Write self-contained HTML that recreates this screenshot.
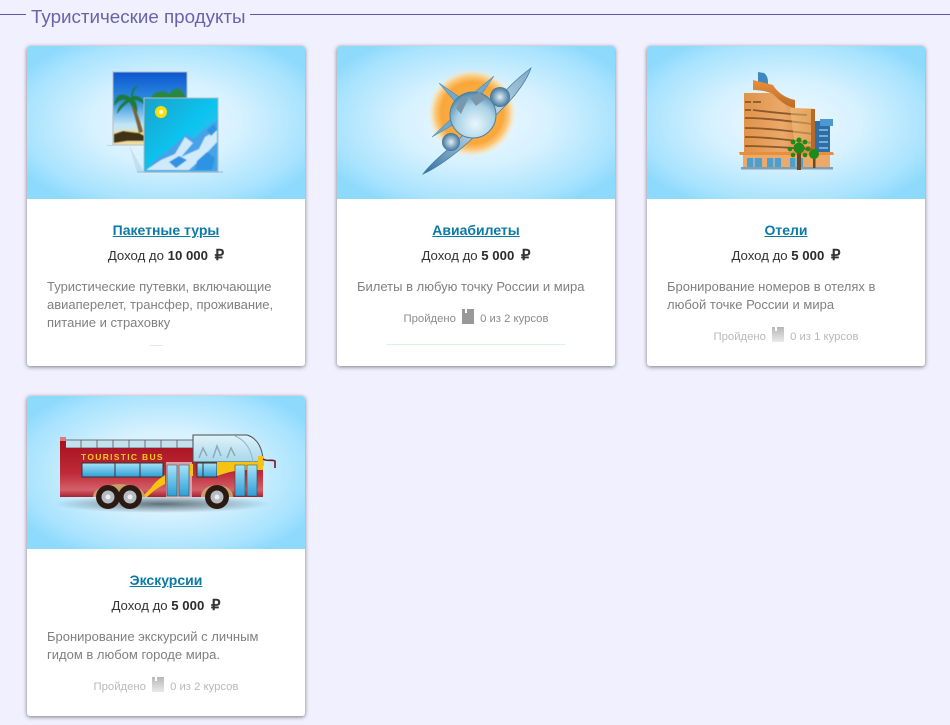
<!DOCTYPE html>
<html lang="ru"><head><meta charset="utf-8"><title>Туристические продукты</title>
<style>
html,body{margin:0;padding:0;width:950px;height:725px;overflow:hidden;background:#f1f0fe;font-family:"Liberation Sans",sans-serif}
.ln{position:absolute;height:1px;top:14px;background:#5f58a8}
h1{position:absolute;left:31px;top:6px;margin:0;font-weight:400;font-size:18.8px;line-height:22px;color:#6a63aa;white-space:nowrap}
.card{position:absolute;width:278px;height:320px;background:#fff;border-radius:3px;box-shadow:0 1px 4px rgba(0,0,0,.5);overflow:hidden}
.img{position:absolute;left:0;top:0;width:278px;height:153px;background:radial-gradient(ellipse 168px 94px at 50% 50%,#eef9ff 0,#d6f1ff 45%,#a8e3fe 85%,#8edafd 100%)}
.img svg{position:absolute;left:0;top:0}
.t{position:absolute;left:0;width:278px;top:175px;text-align:center;font-size:14px;line-height:18px;font-weight:700;color:#0a7aa6;text-decoration:underline}
.p{position:absolute;left:0;width:278px;top:201px;text-align:center;font-size:13.2px;line-height:18px;color:#333}
.p b{color:#2b2b2b}
.p span{font-size:15px;margin-left:3px;font-weight:700}
.d{position:absolute;left:20px;top:232px;width:250px;font-size:13px;line-height:18px;color:#808080}
.c{position:absolute;left:0;width:278px;text-align:center;font-size:11.3px;line-height:14px;color:#8a8a8a;white-space:nowrap}
.c i{display:inline-block;width:12px;height:15px;background:#999;vertical-align:-2px;margin:0 6px 0 3px;position:relative}
.c i:after{content:"";position:absolute;left:3px;top:0;width:2px;height:4px;background:#fff}
</style></head><body>
<div class="ln" style="left:0;width:26px"></div>
<div class="ln" style="left:250px;width:700px"></div>
<h1>Туристические продукты</h1>

<div class="card" style="left:27px;top:46px">
 <div class="img"><svg width="278" height="153" viewBox="0 0 278 153">
  <defs>
   <filter id="b"><feGaussianBlur stdDeviation=".45"/></filter>
   <linearGradient id="sky" x1="0" y1="0" x2="0" y2="1"><stop offset="0" stop-color="#0d56cf"/><stop offset=".4" stop-color="#2f8fe0"/><stop offset=".72" stop-color="#bfe6f6"/><stop offset="1" stop-color="#f5e7b0"/></linearGradient>
   <linearGradient id="ice" x1="0" y1="0" x2="1" y2="1"><stop offset="0" stop-color="#1aa2c8"/><stop offset=".5" stop-color="#0cc3ef"/><stop offset="1" stop-color="#46c4ee"/></linearGradient>
  </defs>
  <path d="M80 99H86V100H80ZM160 125H196V127H110V125Z" fill="#9ab" opacity=".4"/>
  <path d="M102 99L117 126H110Z" fill="#9ab" opacity=".25"/>
  <rect x="86" y="26" width="74" height="73" fill="url(#sky)" stroke="#b5bcc2"/>
  <g filter="url(#b)">
  <path d="M87 86L104 84 118 86V98H87Z" fill="#f0dc9a"/>
  <path d="M87 88L96 85 112 87 118 90V95H100L87 97Z" fill="#3f3218"/>
  <path d="M112 87C109 74 106 63 102 54L104 53C109 63 113 74 116 86Z" fill="#7a6230"/>
  <path d="M104 52C96 46 88 47 87 60 92 54 96 53 99 54 94 58 90 62 90 68 95 61 99 58 102 56 105 60 108 62 110 67 111 60 109 56 107 54 112 54 116 57 118 60 117 52 111 49 106 50 106 45 108 42 112 40 106 40 104 45 104 52Z" fill="#1f7a3a"/>
  <path d="M128 47C134 44 140 45 142 48 146 43 152 40 156 46 158 50 159 52 159 56H122C124 52 125 49 128 47Z" fill="#2a8640"/>
  </g>
  <rect x="117" y="52" width="74" height="74" fill="url(#ice)" stroke="#b5bcc2"/>
  <g filter="url(#b)">
  <path d="M118 125L128 114 141 104 152 95 160 88 166 93 176 84 190 74V125Z" fill="#46a3e8"/>
  <path d="M119 124L134 114 148 108 158 91 166 97 154 111 172 103 178 91 190 84V96L174 113 162 124Z" fill="#cfeafa"/>
  <path d="M170 115L180 106 188 112 185 124H168ZM142 116L152 110 160 114 149 122ZM180 84L187 78 190 84 184 90Z" fill="#2f93e2"/>
  </g>
  <circle cx="134" cy="66" r="6" fill="#ffdf00"/><circle cx="134" cy="66" r="2.4" fill="#fff6c8"/>
 </svg></div>
 <a class="t">Пакетные туры</a>
 <div class="p">Доход до <b>10 000</b> <span>₽</span></div>
 <div class="d">Туристические путевки, включающие авиаперелет, трансфер, проживание, питание и страховку</div>
 <div style="position:absolute;left:123px;top:299px;width:13px;height:1px;background:#e6e6e6"></div>
</div>

<div class="card" style="left:337px;top:46px">
 <div class="img"><svg width="278" height="153" viewBox="0 0 278 153">
  <defs>
   <radialGradient id="sun"><stop offset="0" stop-color="#ffb94a"/><stop offset=".7" stop-color="#f9a63a"/><stop offset=".84" stop-color="#fcca7e"/><stop offset="1" stop-color="#ffe9bc" stop-opacity="0"/></radialGradient>
   <radialGradient id="body" cx=".55" cy=".7" r=".7"><stop offset="0" stop-color="#e8f7fc"/><stop offset=".6" stop-color="#a9d2e6"/><stop offset="1" stop-color="#4f86aa"/></radialGradient>
   <radialGradient id="eng"><stop offset="0" stop-color="#e6eef4"/><stop offset=".5" stop-color="#8fb2c9"/><stop offset="1" stop-color="#3f7498"/></radialGradient>
   <linearGradient id="wing" x1="0" y1="1" x2="1" y2="0"><stop offset="0" stop-color="#2f6f9f"/><stop offset=".5" stop-color="#d0e2ee"/><stop offset="1" stop-color="#7eaac6"/></linearGradient>
  </defs>
  <circle cx="135" cy="67" r="44" fill="url(#sun)"/>
  <path d="M86 128C98 112 118 100 136 78L164 50C174 38 186 28 194 22 191 32 180 48 168 60L140 88C122 106 100 122 86 128Z" fill="url(#wing)" stroke="#3d7aa6" stroke-width=".7"/>
  <path d="M102 37L124 52 120 58ZM157 30L134 49 140 55ZM95 91L117 70 121 76Z" fill="#6fa9d0" stroke="#3b7aa6" stroke-width=".5"/>
  <circle cx="114" cy="96" r="9" fill="url(#eng)"/>
  <circle cx="163" cy="51" r="10" fill="url(#eng)"/>
  <circle cx="136" cy="69" r="23" fill="url(#body)" stroke="#4c7fa3"/>
  <path d="M119 62L126 50 131 53 124 68ZM133 52L142 46 149 52 139 60Z" fill="#7a98ac"/>
 </svg></div>
 <a class="t">Авиабилеты</a>
 <div class="p">Доход до <b>5 000</b> <span>₽</span></div>
 <div class="d">Билеты в любую точку России и мира</div>
 <div class="c" style="top:263px">Пройдено <i></i>0 из 2 курсов</div>
 <div style="position:absolute;left:49px;top:298px;width:180px;height:1px;background:#dcf2e2"></div>
</div>

<div class="card" style="left:647px;top:46px">
 <div class="img"><svg width="278" height="153" viewBox="0 0 278 153">
  <defs>
   <linearGradient id="or" x1="0" y1="0" x2="1" y2="0"><stop offset="0" stop-color="#e0934a"/><stop offset=".55" stop-color="#eba96a"/><stop offset="1" stop-color="#d57c2e"/></linearGradient>
   <linearGradient id="ro" x1="0" y1="0" x2="0" y2="1"><stop offset="0" stop-color="#ea8f3e"/><stop offset="1" stop-color="#bb6c26"/></linearGradient>
  </defs>
  <path d="M111 26L117 27C121 30 121 34 121 39L111 36Z" fill="#3f87bd"/>
  <path d="M168 75H183V106H168Z" fill="#2e6ea5"/>
  <path d="M173 73H186V80H173Z" fill="#4c98d3"/>
  <path d="M172 84H181M172 90H181M172 96H181M172 102H181" stroke="#8cc4e6" stroke-width="1.4"/>
  <path d="M97 47H126L148 62 168 63V106H97Z" fill="url(#or)"/>
  <path d="M106 34L126 39C130 46 138 52 148 54V62C138 60 132 54 126 48 120 45 112 44 106 44Z" fill="url(#ro)"/>
  <path d="M98 56H104M106 56H114M98 64H104M106 64C122 66 138 68 160 69M98 72C120 72 140 75 166 78M98 82C120 82 142 85 166 88M98 91C120 91 142 94 166 97M98 100C120 100 142 102 166 103" stroke="#7a4c22" stroke-width="1.8" fill="none" opacity=".85"/>
  <path d="M143 62H164L166 100H148Z" fill="#f9d496" opacity=".4"/>
  <rect x="164" y="63" width="4" height="43" fill="#b76b2a"/>
  <path d="M92 106H186L187 109H93Z" fill="#e58f3f"/>
  <rect x="96" y="109" width="87" height="12" fill="#eca968"/>
  <path d="M100 112H115V121H100ZM120 112H134V121H120ZM143 112H156V121H143Z" fill="#4f9ed0"/>
  <path d="M107 112V121M127 112V121M149 112V121" stroke="#e8c49a"/>
  <rect x="94" y="121" width="92" height="2.5" fill="#6d8ba0" opacity=".8"/>
  <rect x="150" y="100" width="4" height="24" fill="#6a4a24"/><rect x="166" y="106" width="2.5" height="16" fill="#6a4a24"/>
  <g fill="#1d8a1a"><circle cx="152" cy="102" r="5.5"/><circle cx="152" cy="94" r="2.5"/><circle cx="146" cy="96" r="2.4"/><circle cx="158" cy="96" r="2.4"/><circle cx="143" cy="103" r="2.3"/><circle cx="161" cy="103" r="2.3"/><circle cx="146" cy="109" r="2.3"/><circle cx="158" cy="109" r="2.3"/><circle cx="167" cy="108" r="5"/></g>
 </svg></div>
 <a class="t">Отели</a>
 <div class="p">Доход до <b>5 000</b> <span>₽</span></div>
 <div class="d">Бронирование номеров в отелях в любой точке России и мира</div>
 <div class="c" style="top:281px;opacity:.6">Пройдено <i style="background:linear-gradient(#888,#ddd)"></i>0 из 1 курсов</div>
</div>

<div class="card" style="left:27px;top:396px">
 <div class="img"><svg width="278" height="153" viewBox="0 0 278 153">
  <defs>
   <linearGradient id="red" x1="0" y1="0" x2="0" y2="1"><stop offset="0" stop-color="#a50e1c"/><stop offset=".6" stop-color="#bd2a38"/><stop offset=".88" stop-color="#d4606a"/><stop offset="1" stop-color="#a82230"/></linearGradient>
   <linearGradient id="gl" x1="0" y1="0" x2="0" y2="1"><stop offset="0" stop-color="#dff3fa"/><stop offset="1" stop-color="#a6d8ec"/></linearGradient>
   <linearGradient id="win" x1="0" y1="0" x2="0" y2="1"><stop offset="0" stop-color="#a8e3f8"/><stop offset="1" stop-color="#2d9fd6"/></linearGradient>
   <radialGradient id="sh"><stop offset="0" stop-color="#1a2a33" stop-opacity=".65"/><stop offset="1" stop-color="#1a2a33" stop-opacity="0"/></radialGradient>
  </defs>
  <ellipse cx="135" cy="108" rx="108" ry="9" fill="url(#sh)"/>
  <rect x="38" y="44" width="130" height="8" fill="#c4e2ee" stroke="#555" stroke-width=".8"/>
  <path d="M54 44V52M70 44V52M86 44V52M102 44V52M118 44V52M134 44V52M150 44V52" stroke="#555" stroke-width=".8"/>
  <path d="M33 41H39V52H166V66H236V101H33Z" fill="url(#red)"/>
  <rect x="33" y="41" width="6" height="4" fill="#dc7a80"/>
  <path d="M166 39H220C230 42 236 52 236 66H166Z" fill="url(#gl)" stroke="#4b4b4b"/>
  <path d="M208 40C218 44 224 52 226 66" stroke="#8fb6c6" fill="none"/>
  <path d="M172 62L176 52 180 60M186 62L190 50 194 60M200 62L204 52 208 60" stroke="#8fa9b5" stroke-width="1.5" fill="none"/>
  <rect x="55" y="67" width="81" height="14" fill="url(#win)" stroke="#333"/>
  <path d="M88 67V81M113 67V81" stroke="#333"/>
  <path d="M139 66H165V101H139Z" fill="#d8a0a8"/>
  <path d="M140 69H150V100H140ZM152 69H162V100H152Z" fill="url(#win)" stroke="#444" stroke-width=".6"/>
  <rect x="170" y="67" width="20" height="14" fill="url(#win)" stroke="#333"/>
  <path d="M176 67V81" stroke="#333"/>
  <path d="M190 66H236V74H214C206 75 198 77 190 80Z" fill="#f7c312"/>
  <rect x="163" y="68" width="3" height="12" fill="#f7c312"/>
  <path d="M115 101L124 92C128 86 132 83 138 79V88C132 91 126 95 120 101Z" fill="#f7c312"/>
  <path d="M208 69H218V100H208ZM220 69H230V100H220Z" fill="url(#win)" stroke="#444" stroke-width=".6"/>
  <path d="M231 60H237V70H231Z" fill="#f7c312"/>
  <path d="M236 63C241 66 245 63 248 65V72" fill="none" stroke="#7a1222" stroke-width="1.6"/>
  <text x="54" y="64" font-family="Liberation Sans,sans-serif" font-size="8.5" font-weight="700" letter-spacing="1.3" fill="#f5c91e">TOURISTIC BUS</text>
  <path d="M66 101C66 84 118 84 118 101ZM174 101C174 85 206 85 206 101Z" fill="#c9a06a"/>
  <g>
   <circle cx="81" cy="101" r="12" fill="#2b1a12"/><circle cx="81" cy="101" r="6.5" fill="#b5bcc2"/><circle cx="81" cy="101" r="2.5" fill="#eee"/>
   <circle cx="103" cy="101" r="12" fill="#2b1a12"/><circle cx="103" cy="101" r="6.5" fill="#b5bcc2"/><circle cx="103" cy="101" r="2.5" fill="#eee"/>
   <circle cx="190" cy="101" r="12" fill="#2b1a12"/><circle cx="190" cy="101" r="6.5" fill="#b5bcc2"/><circle cx="190" cy="101" r="2.5" fill="#eee"/>
  </g>
 </svg></div>
 <a class="t" style="top:175px">Экскурсии</a>
 <div class="p">Доход до <b>5 000</b> <span>₽</span></div>
 <div class="d">Бронирование экскурсий с личным гидом в любом городе мира.</div>
 <div class="c" style="top:281px;opacity:.6">Пройдено <i style="background:linear-gradient(#888,#ddd)"></i>0 из 2 курсов</div>
</div>
</body></html>
